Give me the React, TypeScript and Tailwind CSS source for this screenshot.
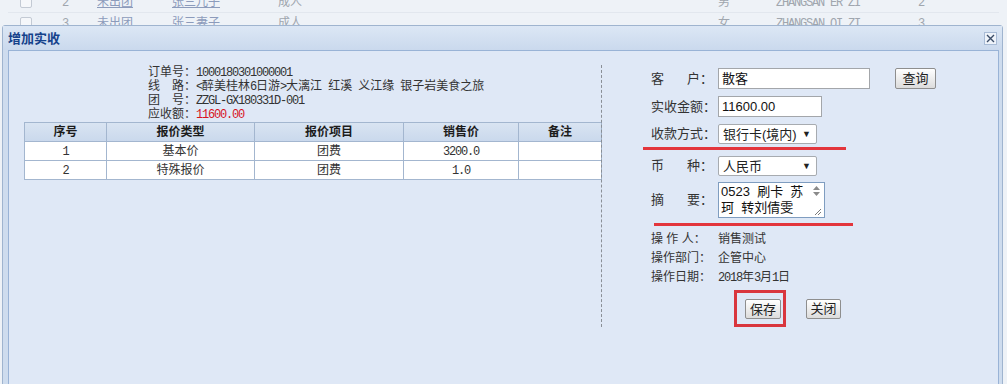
import React from "react";

type BgRow = {
  n: string;
  group: string;
  name: string;
  kind: string;
  sex: string;
  pinyin: string;
  no: string;
};

const bgRows: BgRow[] = [
  { n: "2", group: "未出团", name: "张三儿子", kind: "成人", sex: "男", pinyin: "ZHANGSAN ER ZI", no: "2" },
  { n: "3", group: "未出团", name: "张三妻子", kind: "成人", sex: "女", pinyin: "ZHANGSAN QI ZI", no: "3" },
];

const items = [
  { id: "1", type: "基本价", item: "团费", price: "3200.0", note: "" },
  { id: "2", type: "特殊报价", item: "团费", price: "1.0", note: "" },
];

// SimSun-like half width latin
const M: React.FC<{ children: React.ReactNode; className?: string }> = ({ children, className }) => (
  <span className={["font-['Liberation_Mono',monospace] tracking-[-1.2px]", className ?? ""].join(" ")}>
    {children}
  </span>
);

const Btn: React.FC<{ label: string; className?: string }> = ({ label, className }) => (
  <div
    className={[
      "flex items-center justify-center h-[20px] border border-[#8e8e8e] rounded-[2px] bg-gradient-to-b from-[#ffffff] to-[#dcdcdc] text-[13px] leading-none text-[#222]",
      className ?? "",
    ].join(" ")}
  >
    {label}
  </div>
);

const Select: React.FC<{ value: string }> = ({ value }) => (
  <div className="flex items-center w-[99px] h-[20px] border border-[#a7abb0] rounded-[2px] bg-white pl-[4px] pr-[5px] text-[13px] leading-none text-[#222]">
    <span className="flex-1">{value}</span>
    <span className="text-[9px]">▼</span>
  </div>
);

export default function App() {
  return (
    <div className="relative w-[1007px] h-[384px] overflow-hidden bg-[#eef2f7] font-['Liberation_Sans','Noto_Sans_CJK_SC',sans-serif] text-[#333]">
      {/* grid rows behind the window */}
      <div className="-mt-[8px] pl-[8px] pr-[8px]">
        {bgRows.map((r) => (
          <div key={r.n} className="flex items-center h-[21px] border-b border-[#e2e7ee] text-[12px] text-[#a0a6ae]">
            <div className="ml-[12px] w-[12px] h-[12px] border border-[#c3cad4] rounded-[2px] bg-[#f5f7fa]" />
            <div className="ml-[30px] w-[35px]"><M>{r.n}</M></div>
            <div className="w-[75px] underline text-[#8c9bbb]">{r.group}</div>
            <div className="w-[106px] underline text-[#8c9bbb]">{r.name}</div>
            <div className="w-[440px]">{r.kind}</div>
            <div className="w-[58px]">{r.sex}</div>
            <div className="w-[142px]"><M>{r.pinyin}</M></div>
            <div><M>{r.no}</M></div>
          </div>
        ))}
      </div>

      {/* window */}
      <div className="absolute left-[2px] top-[25px] w-[1001px] h-[370px] border border-[#9fb4cf] rounded-t-[3px] bg-[#cedcee]">
        <div className="flex items-center h-[24px] pl-[5px] pr-[5px] bg-gradient-to-b from-[#dce7f5] to-[#cad9ed]">
          <span className="text-[13px] font-bold text-[#15428b] leading-none">增加实收</span>
          <div className="ml-auto flex items-center justify-center w-[13px] h-[13px] border border-[#a9bcd6] bg-[#eef3fa]">
            <svg width="9" height="9" viewBox="0 0 9 9">
              <path d="M1 1 L8 8 M8 1 L1 8" stroke="#3b4d68" strokeWidth="1.4" />
            </svg>
          </div>
        </div>

        <div className="ml-[5px] mr-[3px] h-[340px] border border-[#99b3d6] bg-[#dfe8f6] pt-[14px]">
          <div className="flex">
            {/* left: order info + price table */}
            <div className="w-[592px]">
              <div className="ml-[139px] text-[12px] leading-[14px] text-[#333]">
                <div className="h-[14px] whitespace-nowrap">订单号：<M>1000180301000001</M></div>
                <div className="h-[14px] whitespace-nowrap">
                  线　路：<M>&lt;</M>醉美桂林<M>6</M>日游<M>&gt;</M>大漓江<M> </M>红溪<M> </M>义江缘<M> </M>银子岩美食之旅
                </div>
                <div className="h-[14px] whitespace-nowrap">团　号：<M>ZZGL-GX180331D-001</M></div>
                <div className="h-[14px] whitespace-nowrap">
                  应收额：<M className="text-[#d8141e]">11600.00</M>
                </div>
              </div>
              <table className="mt-[1px] ml-[15px] w-[577px] table-fixed border-collapse text-[12px]">
                <colgroup>
                  <col className="w-[82px]" />
                  <col className="w-[148px]" />
                  <col className="w-[149px]" />
                  <col className="w-[115px]" />
                  <col className="w-[83px]" />
                </colgroup>
                <thead>
                  <tr className="h-[19px] bg-gradient-to-b from-[#d9e4f2] to-[#c9d8ec]">
                    {["序号", "报价类型", "报价项目", "销售价", "备注"].map((h) => (
                      <th key={h} className="border border-[#a3b6cf] p-0 font-bold text-[#1c1c1c] leading-none">
                        {h}
                      </th>
                    ))}
                  </tr>
                </thead>
                <tbody>
                  {items.map((it) => (
                    <tr key={it.id} className="h-[19px] bg-white">
                      <td className="border border-[#a3b6cf] p-0 text-center leading-none"><M>{it.id}</M></td>
                      <td className="border border-[#a3b6cf] p-0 text-center leading-none">{it.type}</td>
                      <td className="border border-[#a3b6cf] p-0 text-center leading-none">{it.item}</td>
                      <td className="border border-[#a3b6cf] p-0 text-center leading-none"><M>{it.price}</M></td>
                      <td className="border border-[#a3b6cf] p-0 text-center leading-none">{it.note}</td>
                    </tr>
                  ))}
                </tbody>
              </table>
            </div>

            {/* right: payment form */}
            <div className="h-[262px] border-l border-dashed border-[#8a8f96] pl-[49px] flex flex-col">
              <div className="mt-[3px] flex items-center h-[21px]">
                <div className="w-[67px] text-[13px]">
                  <div className="flex justify-between w-[62px]"><span>客</span><span>户：</span></div>
                </div>
                <div className="w-[152px] h-[21px] border border-[#a3a6aa] bg-white pl-[3px] text-[13px] leading-[19px] text-[#111]">散客</div>
                <Btn label="查询" className="ml-[25px] w-[41px] h-[21px]" />
              </div>

              <div className="mt-[7px] flex items-center h-[21px]">
                <div className="w-[67px] text-[13px]">实收金额：</div>
                <div className="w-[104px] h-[21px] border border-[#a3a6aa] bg-white pl-[3px] text-[13px] leading-[19px] text-[#111]">11600.00</div>
              </div>

              <div className="mt-[7px] flex items-center h-[20px]">
                <div className="w-[67px] text-[13px]">收款方式：</div>
                <Select value="银行卡(境内)" />
              </div>

              <div className="mt-[3px] -ml-[8px] w-[203px] h-[3px] bg-[#e3353c]" />

              <div className="mt-[6px] flex items-center h-[20px]">
                <div className="w-[67px] text-[13px]">
                  <div className="flex justify-between w-[62px]"><span>币</span><span>种：</span></div>
                </div>
                <Select value="人民币" />
              </div>

              <div className="mt-[6px] flex items-center h-[36px]">
                <div className="w-[67px] text-[13px]">
                  <div className="flex justify-between w-[62px]"><span>摘</span><span>要：</span></div>
                </div>
                <div className="flex w-[107px] h-[36px] border border-[#7f9dc0] bg-white">
                  <div className="flex-1 overflow-hidden pl-[2px] pt-[1px] text-[13px] leading-[16px] text-[#111] whitespace-pre">
                    <div>0523  刷卡  苏</div>
                    <div>珂  转刘倩雯</div>
                    <div>支付宝收款</div>
                  </div>
                  <div className="w-[15px] flex flex-col items-center justify-between pt-[2px] pb-[1px]">
                    <svg width="9" height="12" viewBox="0 0 9 12">
                      <path d="M4.5 1 L8 5 L1 5 Z" fill="#8a8a8a" />
                      <path d="M4.5 11 L8 7 L1 7 Z" fill="#8a8a8a" />
                    </svg>
                    <svg width="10" height="10" viewBox="0 0 10 10">
                      <path d="M9 3 L3 9 M9 6 L6 9" stroke="#7a7a7a" strokeWidth="1" />
                    </svg>
                  </div>
                </div>
              </div>

              <div className="mt-[5px] ml-[3px] w-[199px] h-[3px] bg-[#e3353c]" />

              <div className="mt-[4px] text-[12px] leading-[19px]">
                <div className="flex">
                  <span className="w-[67px] whitespace-pre">操 作 人：</span>
                  <span>销售测试</span>
                </div>
                <div className="flex">
                  <span className="w-[67px]">操作部门：</span>
                  <span>企管中心</span>
                </div>
                <div className="flex">
                  <span className="w-[67px]">操作日期：</span>
                  <span><M>2018</M>年<M>3</M>月<M>1</M>日</span>
                </div>
              </div>

              <div className="mt-[2px] ml-[83px] flex items-center">
                <div className="border-[3px] border-[#d9363e] pl-[8px] pr-[2px] pt-[6px] pb-[5px]">
                  <Btn label="保存" className="w-[36px]" />
                </div>
                <Btn label="关闭" className="ml-[20px] w-[35px]" />
              </div>
            </div>
          </div>
        </div>
      </div>
    </div>
  );
}
